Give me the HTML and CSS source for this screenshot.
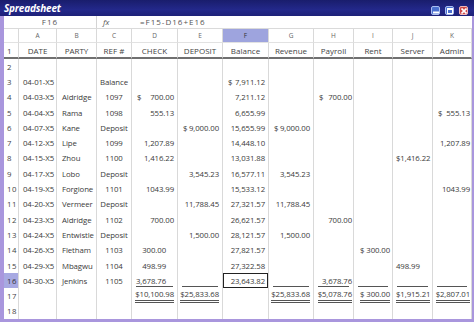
FILE: index.html
```html
<!DOCTYPE html>
<html>
<head>
<meta charset="utf-8">
<title>Spreadsheet</title>
<link rel="stylesheet" href="styles.css">
</head>
<body>
<div class="window">
  <div class="titlebar">
    <span class="title">Spreadsheet</span>
    <div class="winbtns">
      <span class="wbtn"><svg width="6" height="6" viewBox="0 0 6 6"><rect x="0" y="3.5" width="6" height="2" fill="#fff"/></svg></span>
      <span class="wbtn"><svg width="6" height="6" viewBox="0 0 6 6"><rect x="0.5" y="0.5" width="5" height="5" fill="none" stroke="#fff"/><rect x="0" y="0" width="6" height="2" fill="#fff"/></svg></span>
      <span class="wbtn close"><svg width="6" height="6" viewBox="0 0 6 6"><path d="M0.5 0.5 L5.5 5.5 M5.5 0.5 L0.5 5.5" stroke="#fff" stroke-width="1.6"/></svg></span>
    </div>
  </div>
  <div class="frame">
    <div class="sheet">
      <div class="formula">
        <div class="namebox">F16</div>
        <div class="fx">fx</div>
        <div class="expr">=F15-D16+E16</div>
      </div>
      <div class="cols colhead">
        <div></div><div>A</div><div>B</div><div>C</div><div>D</div><div>E</div><div class="cur">F</div><div>G</div><div>H</div><div>I</div><div>J</div><div>K</div>
      </div>
      <div class="cols hdrow">
        <div class="rnh">1</div><div>DATE</div><div>PARTY</div><div>REF #</div><div>CHECK</div><div>DEPOSIT</div><div>Balance</div><div>Revenue</div><div>Payroll</div><div>Rent</div><div>Server</div><div>Admin</div>
      </div>
      <div class="cols data">
        <div>2</div><div></div><div></div><div></div><div></div><div></div><div></div><div></div><div></div><div></div><div></div><div></div>
        <div>3</div><div>04-01-X5</div><div></div><div>Balance</div><div></div><div></div><div class="acc"><span>$</span><span>7,911.12</span></div><div></div><div></div><div></div><div></div><div></div>
        <div>4</div><div>04-03-X5</div><div>Aldridge</div><div>1097</div><div class="acc"><span>$</span><span>700.00</span></div><div></div><div>7,211.12</div><div></div><div class="acc"><span>$</span><span>700.00</span></div><div></div><div></div><div></div>
        <div>5</div><div>04-04-X5</div><div>Rama</div><div>1098</div><div>555.13</div><div></div><div>6,655.99</div><div></div><div></div><div></div><div></div><div class="acc"><span>$</span><span>555.13</span></div>
        <div>6</div><div>04-07-X5</div><div>Kane</div><div>Deposit</div><div></div><div class="acc"><span>$</span><span>9,000.00</span></div><div>15,655.99</div><div class="acc"><span>$</span><span>9,000.00</span></div><div></div><div></div><div></div><div></div>
        <div>7</div><div>04-12-X5</div><div>Lipe</div><div>1099</div><div>1,207.89</div><div></div><div>14,448.10</div><div></div><div></div><div></div><div></div><div>1,207.89</div>
        <div>8</div><div>04-15-X5</div><div>Zhou</div><div>1100</div><div>1,416.22</div><div></div><div>13,031.88</div><div></div><div></div><div></div><div>$1,416.22</div><div></div>
        <div>9</div><div>04-17-X5</div><div>Lobo</div><div>Deposit</div><div></div><div>3,545.23</div><div>16,577.11</div><div>3,545.23</div><div></div><div></div><div></div><div></div>
        <div>10</div><div>04-19-X5</div><div>Forgione</div><div>1101</div><div>1043.99</div><div></div><div>15,533.12</div><div></div><div></div><div></div><div></div><div>1043.99</div>
        <div>11</div><div>04-20-X5</div><div>Vermeer</div><div>Deposit</div><div></div><div>11,788.45</div><div>27,321.57</div><div>11,788.45</div><div></div><div></div><div></div><div></div>
        <div>12</div><div>04-23-X5</div><div>Aldridge</div><div>1102</div><div>700.00</div><div></div><div>26,621.57</div><div></div><div>700.00</div><div></div><div></div><div></div>
        <div>13</div><div>04-24-X5</div><div>Entwistle</div><div>Deposit</div><div></div><div>1,500.00</div><div>28,121.57</div><div>1,500.00</div><div></div><div></div><div></div><div></div>
        <div>14</div><div>04-26-X5</div><div>Fletham</div><div>1103</div><div class="dr">300.00</div><div></div><div>27,821.57</div><div></div><div></div><div>$ 300.00</div><div></div><div></div>
        <div>15</div><div>04-29-X5</div><div>Mbagwu</div><div>1104</div><div class="dr">498.99</div><div></div><div>27,322.58</div><div></div><div></div><div></div><div>498.99</div><div></div>
        <div class="rsel">16</div><div>04-30-X5</div><div>Jenkins</div><div>1105</div><div class="dr ul">3,678.76</div><div class="ul"></div><div class="sel">23,643.82</div><div class="ul"></div><div class="ul">3,678.76</div><div class="ul"></div><div class="ul"></div><div class="ul"></div>
        <div>17</div><div></div><div></div><div></div><div class="tot"><span>$10,100.98</span></div><div class="tot"><span>$25,833.68</span></div><div></div><div class="tot"><span>$25,833.68</span></div><div class="tot"><span>$5,078.76</span></div><div class="tot"><span>$ 300.00</span></div><div class="tot"><span>$1,915.21</span></div><div class="tot"><span>$2,807.01</span></div>
        <div>18</div><div></div><div></div><div></div><div></div><div></div><div></div><div></div><div></div><div></div><div></div><div></div>
      </div>
    </div>
  </div>
</div>
</body>
</html>
```

FILE: styles.css
```css
* { box-sizing: border-box; margin: 0; padding: 0; }
html, body { width: 474px; height: 322px; overflow: hidden; }
body {
  font-family: "Open Sans", "Noto Sans", sans-serif;
  color: #3a3a3a;
  background: #fff;
}
.window {
  width: 474px;
  height: 322px;
  display: flex;
  flex-direction: column;
  background: #a996dd;
}
.titlebar {
  height: 16px;
  flex: none;
  background: linear-gradient(#191d6c, #23288a 60%, #1d2178);
  display: flex;
  align-items: center;
  justify-content: space-between;
  padding: 0 6px 0 4px;
}
.title {
  color: #fff;
  font: italic 700 10px "Open Sans", sans-serif;
  letter-spacing: -0.2px;
}
.winbtns { display: flex; gap: 5px; align-self: flex-end; margin-bottom: 1px; }
.wbtn {
  width: 9px; height: 9px;
  border-radius: 2px;
  background: #4a6fcf;
  border: 1px solid #a9bdf0;
  display: flex; align-items: center; justify-content: center;
}
.wbtn.close { background: #cf4848; border-color: #f2b8b8; }
.frame { flex: 1; padding: 0 2px 3px 4px; }
.sheet { background: #fff; height: 100%; display: flex; flex-direction: column; overflow: hidden; }

.formula {
  height: 13px; flex: none;
  display: flex;
  border-bottom: 1px solid #dadada;
  font-size: 8px; line-height: 12px; color: #555;
}
.namebox { width: 93px; text-align: center; border-right: 1px solid #d4d4d4; letter-spacing: 1px; }
.fx { width: 35px; padding-left: 6px; font-style: italic; }
.expr { flex: 1; padding-left: 8px; letter-spacing: 1px; }

.cols {
  display: grid;
  grid-template-columns: 15px 38px 40px 35px 46px 45px 46px 45px 40px 39px 40px 39px;
  flex: none;
}
.cols > div {
  border-right: 1px solid #d9d9d9;
  white-space: nowrap;
  overflow: hidden;
  display: flex;
  align-items: center;
}
.colhead { grid-template-rows: 14px; font-size: 6.5px; color: #666; }
.colhead > div { justify-content: center; border-bottom: 1px solid #e2e2e2; }
.colhead > .cur { background: #9ea4de; color: #333; }

.hdrow { grid-template-rows: 16px; font-size: 8px; color: #444; }
.hdrow > div { justify-content: center; border-bottom: 2px solid #707070; }
.hdrow > .rnh { justify-content: flex-start; padding-left: 3px; }

.data { grid-template-rows: repeat(17, 15.3px); font-size: 7.8px; letter-spacing: -0.1px; }
.data > div { padding: 0 3px 0 5px; justify-content: flex-end; }
.data > div:nth-child(12n+1) { justify-content: flex-start; padding-left: 3px; color: #444; letter-spacing: 0.6px; }
.data > div:nth-child(12n+2) { justify-content: flex-start; padding-left: 4px; }
.data > div:nth-child(12n+3) { justify-content: flex-start; padding-left: 5px; }
.data > div:nth-child(12n+4) { justify-content: center; padding: 0; }
.data > div:nth-child(12n+9) { padding-right: 1px; }
.data > div:nth-child(12n+10) { justify-content: flex-start; padding-left: 6px; }
.data > div:nth-child(12n+11) { justify-content: flex-start; padding-left: 3px; }
.data > div:nth-child(12n) { padding-right: 1px; }
.data > div.acc { justify-content: space-between; }
.data > div.dr { padding-right: 11px; }
.data > div.rsel { background: #a7a9e2; color: #333; }
.data > div.ul {
  background: linear-gradient(#555, #555) no-repeat;
  background-size: calc(100% - 8px) 1px;
  background-position: 4px calc(100% - 1px);
}
.data > div.sel { box-shadow: inset 0 0 0 1px #222; }
.data > div.tot { align-items: flex-end; padding-bottom: 1px; }
.tot span { border-bottom: 3px double #555; line-height: 11px; }
```
